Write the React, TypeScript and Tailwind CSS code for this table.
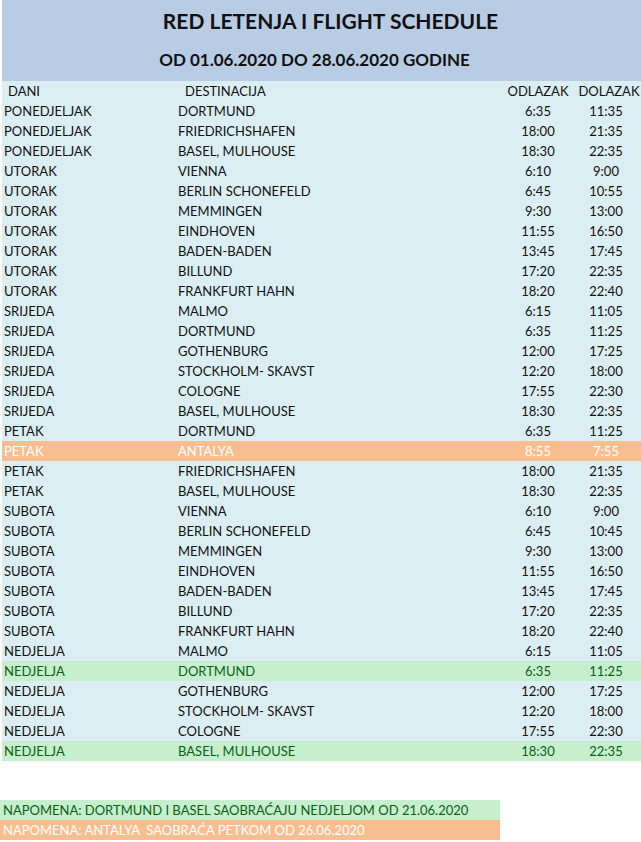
import React from 'react';

type Flight = {
  day: string;
  dest: string;
  dep: string;
  arr: string;
  tone?: 'orange' | 'green';
};

const flights: Flight[] = [
  { day: 'PONEDJELJAK', dest: 'DORTMUND', dep: '6:35', arr: '11:35' },
  { day: 'PONEDJELJAK', dest: 'FRIEDRICHSHAFEN', dep: '18:00', arr: '21:35' },
  { day: 'PONEDJELJAK', dest: 'BASEL, MULHOUSE', dep: '18:30', arr: '22:35' },
  { day: 'UTORAK', dest: 'VIENNA', dep: '6:10', arr: '9:00' },
  { day: 'UTORAK', dest: 'BERLIN SCHONEFELD', dep: '6:45', arr: '10:55' },
  { day: 'UTORAK', dest: 'MEMMINGEN', dep: '9:30', arr: '13:00' },
  { day: 'UTORAK', dest: 'EINDHOVEN', dep: '11:55', arr: '16:50' },
  { day: 'UTORAK', dest: 'BADEN-BADEN', dep: '13:45', arr: '17:45' },
  { day: 'UTORAK', dest: 'BILLUND', dep: '17:20', arr: '22:35' },
  { day: 'UTORAK', dest: 'FRANKFURT HAHN', dep: '18:20', arr: '22:40' },
  { day: 'SRIJEDA', dest: 'MALMO', dep: '6:15', arr: '11:05' },
  { day: 'SRIJEDA', dest: 'DORTMUND', dep: '6:35', arr: '11:25' },
  { day: 'SRIJEDA', dest: 'GOTHENBURG', dep: '12:00', arr: '17:25' },
  { day: 'SRIJEDA', dest: 'STOCKHOLM- SKAVST', dep: '12:20', arr: '18:00' },
  { day: 'SRIJEDA', dest: 'COLOGNE', dep: '17:55', arr: '22:30' },
  { day: 'SRIJEDA', dest: 'BASEL, MULHOUSE', dep: '18:30', arr: '22:35' },
  { day: 'PETAK', dest: 'DORTMUND', dep: '6:35', arr: '11:25' },
  { day: 'PETAK', dest: 'ANTALYA', dep: '8:55', arr: '7:55', tone: 'orange' },
  { day: 'PETAK', dest: 'FRIEDRICHSHAFEN', dep: '18:00', arr: '21:35' },
  { day: 'PETAK', dest: 'BASEL, MULHOUSE', dep: '18:30', arr: '22:35' },
  { day: 'SUBOTA', dest: 'VIENNA', dep: '6:10', arr: '9:00' },
  { day: 'SUBOTA', dest: 'BERLIN SCHONEFELD', dep: '6:45', arr: '10:45' },
  { day: 'SUBOTA', dest: 'MEMMINGEN', dep: '9:30', arr: '13:00' },
  { day: 'SUBOTA', dest: 'EINDHOVEN', dep: '11:55', arr: '16:50' },
  { day: 'SUBOTA', dest: 'BADEN-BADEN', dep: '13:45', arr: '17:45' },
  { day: 'SUBOTA', dest: 'BILLUND', dep: '17:20', arr: '22:35' },
  { day: 'SUBOTA', dest: 'FRANKFURT HAHN', dep: '18:20', arr: '22:40' },
  { day: 'NEDJELJA', dest: 'MALMO', dep: '6:15', arr: '11:05' },
  { day: 'NEDJELJA', dest: 'DORTMUND', dep: '6:35', arr: '11:25', tone: 'green' },
  { day: 'NEDJELJA', dest: 'GOTHENBURG', dep: '12:00', arr: '17:25' },
  { day: 'NEDJELJA', dest: 'STOCKHOLM- SKAVST', dep: '12:20', arr: '18:00' },
  { day: 'NEDJELJA', dest: 'COLOGNE', dep: '17:55', arr: '22:30' },
  { day: 'NEDJELJA', dest: 'BASEL, MULHOUSE', dep: '18:30', arr: '22:35', tone: 'green' }
];

const rowTone = (tone?: Flight['tone']) => {
  if (tone === 'orange') return 'bg-[#f9be8f] text-white';
  if (tone === 'green') return 'bg-[#c6efce] text-[#0b6114]';
  return 'text-[#111]';
};

export default function App() {
  return (
    <div className="w-[641px] h-[842px] bg-white font-['Lato',sans-serif] text-[13px]">
      <div className="ml-[2px] h-[81px] bg-[#b8cce4] flex flex-col items-center text-[#111] font-bold">
        <h1 className="mt-[7px] text-[21px] leading-[28px] pl-[18px]">RED LETENJA I FLIGHT SCHEDULE</h1>
        <h2 className="mt-[13px] text-[17px] leading-[24px] pr-[14px]">OD 01.06.2020 DO 28.06.2020 GODINE</h2>
      </div>

      <div className="ml-[2px] bg-[#dbeef4]">
        <div className="grid grid-cols-[176px_327px_66px_70px] h-[20px] items-center leading-[20px] text-[#111]">
          <span className="pl-[6px]">DANI</span>
          <span className="pl-[7px]">DESTINACIJA</span>
          <span className="text-center">ODLAZAK</span>
          <span className="text-center pl-[6px]">DOLAZAK</span>
        </div>
        {flights.map((f, i) => (
          <div
            key={i}
            className={`grid grid-cols-[176px_327px_66px_70px] h-[20px] items-center leading-[20px] ${rowTone(f.tone)}`}
          >
            <span className="pl-[2px]">{f.day}</span>
            <span>{f.dest}</span>
            <span className="text-center">{f.dep}</span>
            <span className="text-center">{f.arr}</span>
          </div>
        ))}
      </div>

      <div className="mt-[39px] w-[500px] text-[13px] leading-[20px]">
        <p className="h-[20px] bg-[#c6efce] text-[#0b6114] pl-[3px]">
          NAPOMENA: DORTMUND I BASEL SAOBRAĆAJU NEDJELJOM OD 21.06.2020
        </p>
        <p className="h-[20px] bg-[#f9be8f] text-white pl-[3px] whitespace-pre">
          NAPOMENA: ANTALYA  SAOBRAĆA PETKOM OD 26.06.2020
        </p>
      </div>
    </div>
  );
}
